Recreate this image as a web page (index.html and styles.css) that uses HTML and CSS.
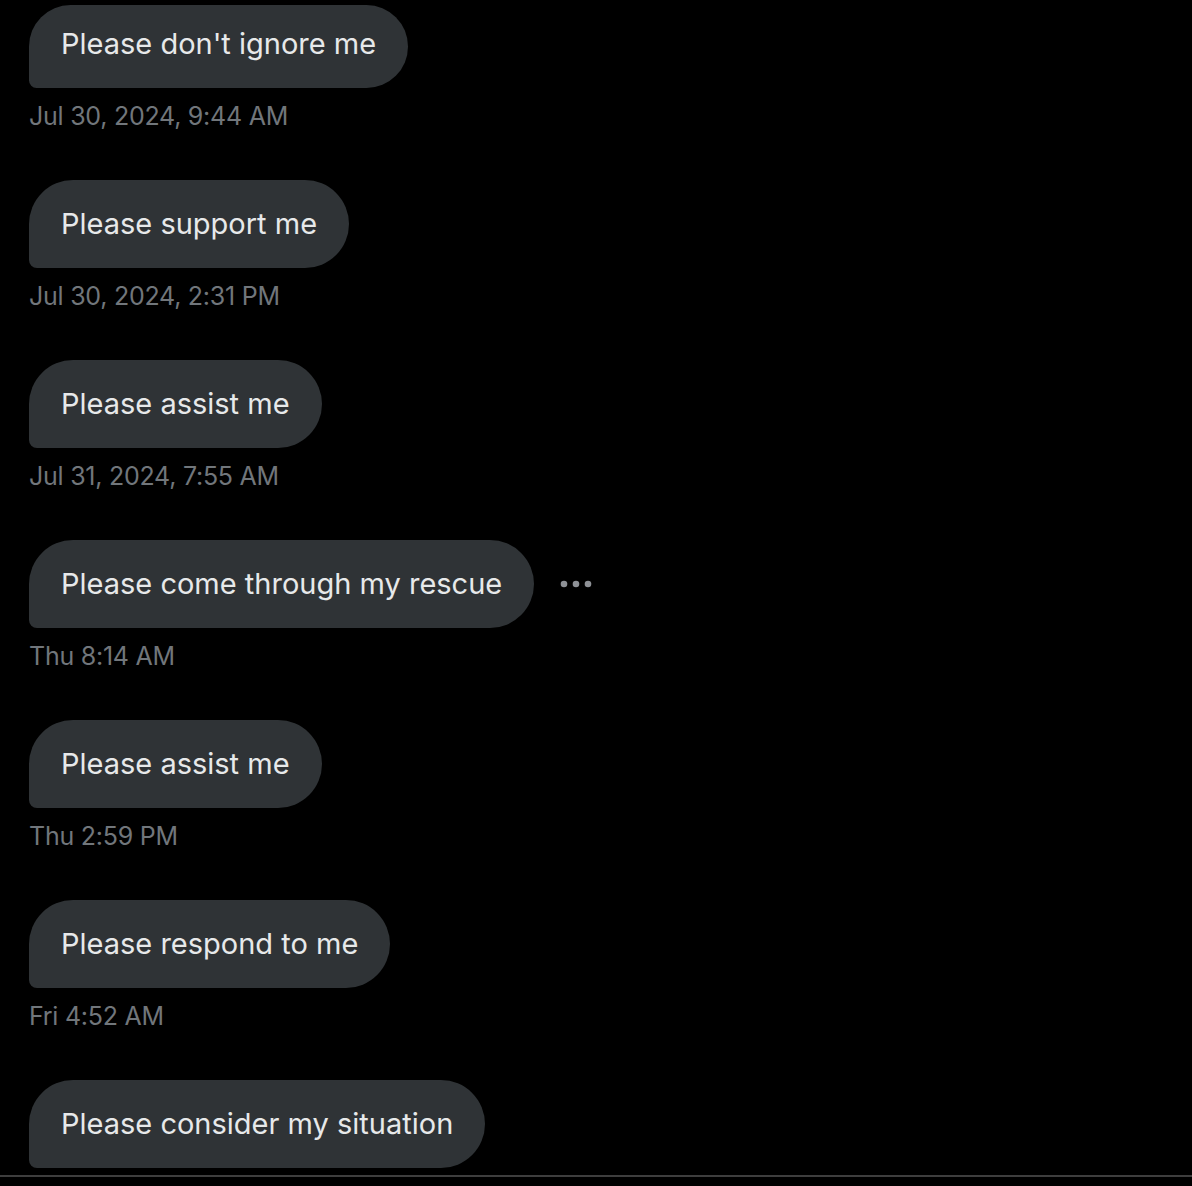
FILE: index.html
```html
<!DOCTYPE html>
<html>
<head>
<meta charset="utf-8">
<link rel="stylesheet" href="styles.css">
</head>
<body>
<div class="thread">
  <div class="msg first">
    <div class="row"><div class="bubble">Please don't ignore me</div></div>
    <div class="time">Jul 30, 2024, 9:44 AM</div>
  </div>
  <div class="msg">
    <div class="row"><div class="bubble">Please support me</div></div>
    <div class="time">Jul 30, 2024, 2:31 PM</div>
  </div>
  <div class="msg">
    <div class="row"><div class="bubble">Please assist me</div></div>
    <div class="time">Jul 31, 2024, 7:55 AM</div>
  </div>
  <div class="msg">
    <div class="row">
      <div class="bubble">Please come through my rescue</div>
      <div class="more" aria-label="More">
        <svg width="34" height="8" viewBox="0 0 34 8"><circle cx="4" cy="4" r="3.3" fill="#8e9196"/><circle cx="16" cy="4" r="3.3" fill="#8e9196"/><circle cx="28" cy="4" r="3.3" fill="#8e9196"/></svg>
      </div>
    </div>
    <div class="time">Thu 8:14 AM</div>
  </div>
  <div class="msg">
    <div class="row"><div class="bubble">Please assist me</div></div>
    <div class="time">Thu 2:59 PM</div>
  </div>
  <div class="msg">
    <div class="row"><div class="bubble">Please respond to me</div></div>
    <div class="time">Fri 4:52 AM</div>
  </div>
  <div class="msg">
    <div class="row"><div class="bubble">Please consider my situation</div></div>
  </div>
</div>
<div class="composer-edge"></div>
</body>
</html>
```

FILE: styles.css
```css
html, body {
  margin: 0;
  padding: 0;
  background: #000;
  height: 1186px;
  overflow: hidden;
}
body {
  font-family: "Inter", "Roboto", "Liberation Sans", sans-serif;
  position: relative;
}
.thread {
  display: flex;
  flex-direction: column;
  gap: 48px;
  padding: 5px 0 0 29px;
}
.msg {
  display: flex;
  flex-direction: column;
  align-items: flex-start;
}
.row {
  display: flex;
  align-items: center;
  gap: 26px;
}
.bubble {
  background: #2f3336;
  color: #e7e9ea;
  font-size: 29px;
  line-height: 40px;
  padding: 24px 32px;
  border-radius: 44px 44px 44px 8px;
  white-space: nowrap;
}
.first .bubble {
  padding-top: 19px;
}
.more {
  display: flex;
  align-items: center;
  height: 40px;
}
.more svg {
  display: block;
}
.time {
  margin-top: 12px;
  color: #71767b;
  font-size: 25px;
  letter-spacing: -0.25px;
  line-height: 32px;
}
.composer-edge {
  position: absolute;
  left: 0;
  right: 0;
  top: 1175px;
  height: 2px;
  background: #3e3e3e;
}
```
